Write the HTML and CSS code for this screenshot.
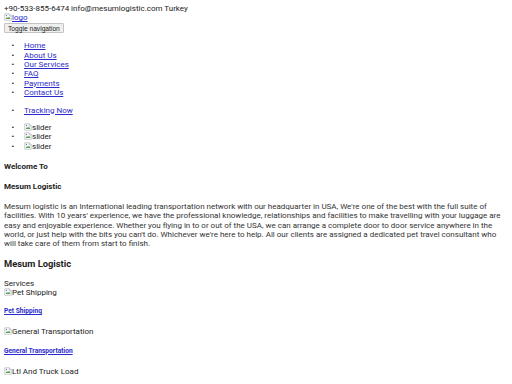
FILE: index.html
```html
<!DOCTYPE html>
<html lang="en">
<head>
<meta charset="utf-8">
<title>Mesum Logistic</title>
<link rel="stylesheet" href="styles.css">
</head>
<body>
<div class="topbar">+90-533-855-6474 info@mesumlogistic.com Turkey</div>
<div class="brand"><a class="link" href="#"><span class="broken"><svg class="bi" viewBox="0 0 16 16"><path d="M1.5 1.5h9l4 4v9h-13z" fill="#fff" stroke="#9a9a9a"/><path d="M10.5 1.5v4h4" fill="none" stroke="#9a9a9a"/><path d="M3 12l3-4 2 2 2-3 3 5z" fill="#5aa05a"/><circle cx="5" cy="5" r="1.3" fill="#4a86c8"/></svg>logo</span></a></div>
<button class="toggle" type="button">Toggle navigation</button>
<ul class="list">
  <li><a class="link" href="#">Home</a></li>
  <li><a class="link" href="#">About Us</a></li>
  <li><a class="link" href="#">Our Services</a></li>
  <li><a class="link" href="#">FAQ</a></li>
  <li><a class="link" href="#">Payments</a></li>
  <li><a class="link" href="#">Contact Us</a></li>
</ul>
<ul class="list">
  <li><a class="link" href="#">Tracking Now</a></li>
</ul>
<ul class="list">
  <li><span class="broken"><svg class="bi" viewBox="0 0 16 16"><path d="M1.5 1.5h9l4 4v9h-13z" fill="#fff" stroke="#9a9a9a"/><path d="M10.5 1.5v4h4" fill="none" stroke="#9a9a9a"/><path d="M3 12l3-4 2 2 2-3 3 5z" fill="#5aa05a"/><circle cx="5" cy="5" r="1.3" fill="#4a86c8"/></svg>slider</span></li>
  <li><span class="broken"><svg class="bi" viewBox="0 0 16 16"><path d="M1.5 1.5h9l4 4v9h-13z" fill="#fff" stroke="#9a9a9a"/><path d="M10.5 1.5v4h4" fill="none" stroke="#9a9a9a"/><path d="M3 12l3-4 2 2 2-3 3 5z" fill="#5aa05a"/><circle cx="5" cy="5" r="1.3" fill="#4a86c8"/></svg>slider</span></li>
  <li><span class="broken"><svg class="bi" viewBox="0 0 16 16"><path d="M1.5 1.5h9l4 4v9h-13z" fill="#fff" stroke="#9a9a9a"/><path d="M10.5 1.5v4h4" fill="none" stroke="#9a9a9a"/><path d="M3 12l3-4 2 2 2-3 3 5z" fill="#5aa05a"/><circle cx="5" cy="5" r="1.3" fill="#4a86c8"/></svg>slider</span></li>
</ul>
<h4 class="heading-sm">Welcome To</h4>
<h4 class="heading-sm">Mesum Logistic</h4>
<p class="about">Mesum logistic is an International leading transportation network with our headquarter in USA, We're one of the best with the full suite of facilities. With 10 years' experience, we have the professional knowledge, relationships and facilities to make travelling with your luggage are easy and enjoyable experience. Whether you flying in to or out of the USA, we can arrange a complete door to door service anywhere in the world, or just help with the bits you can't do. Whichever we're here to help. All our clients are assigned a dedicated pet travel consultant who will take care of them from start to finish.</p>
<h3 class="heading-md">Mesum Logistic</h3>
<div class="services-label">Services</div>
<div class="service">
  <span class="broken"><svg class="bi" viewBox="0 0 16 16"><path d="M1.5 1.5h9l4 4v9h-13z" fill="#fff" stroke="#9a9a9a"/><path d="M10.5 1.5v4h4" fill="none" stroke="#9a9a9a"/><path d="M3 12l3-4 2 2 2-3 3 5z" fill="#5aa05a"/><circle cx="5" cy="5" r="1.3" fill="#4a86c8"/></svg>Pet Shipping</span>
  <h5 class="service-title"><a class="link" href="#">Pet Shipping</a></h5>
</div>
<div class="service">
  <span class="broken"><svg class="bi" viewBox="0 0 16 16"><path d="M1.5 1.5h9l4 4v9h-13z" fill="#fff" stroke="#9a9a9a"/><path d="M10.5 1.5v4h4" fill="none" stroke="#9a9a9a"/><path d="M3 12l3-4 2 2 2-3 3 5z" fill="#5aa05a"/><circle cx="5" cy="5" r="1.3" fill="#4a86c8"/></svg>General Transportation</span>
  <h5 class="service-title"><a class="link" href="#">General Transportation</a></h5>
</div>
<div class="service">
  <span class="broken"><svg class="bi" viewBox="0 0 16 16"><path d="M1.5 1.5h9l4 4v9h-13z" fill="#fff" stroke="#9a9a9a"/><path d="M10.5 1.5v4h4" fill="none" stroke="#9a9a9a"/><path d="M3 12l3-4 2 2 2-3 3 5z" fill="#5aa05a"/><circle cx="5" cy="5" r="1.3" fill="#4a86c8"/></svg>Ltl And Truck Load</span>
</div>
</body>
</html>
```
FILE: styles.css
```css
body {
  margin: 4px;
  font-family: Roboto, "Liberation Sans", sans-serif;
  font-size: 8px;
  line-height: 1.175;
  color: #222;
  background: #fff;
}
.link {
  color: #2b2bcc;
  text-decoration: underline;
}
.bi {
  width: 8px;
  height: 8px;
  vertical-align: -1px;
}
.toggle {
  display: block;
  font-family: "Liberation Sans", Arial, sans-serif;
  font-size: 6.67px;
  line-height: normal;
  padding: 0.5px 3px;
  background: #efefef;
  border: 1px solid #c4c4c4;
  border-radius: 1px;
  color: #222;
  height: 10.5px;
}
.list {
  margin: 8px 0;
  padding-left: 20px;
  list-style-type: "\2022\00a0\00a0\00a0\00a0\00a0";
}
.list li::marker {
  color: #111;
}
.heading-sm {
  font-size: 8px;
  font-weight: bold;
  margin: 10.64px 0;
}
.about {
  font-size: 8px;
  margin: 8px 0;
  color: #333;
}
.heading-md {
  font-size: 9.36px;
  font-weight: bold;
  margin: 9.36px 0;
}
.service-title {
  font-size: 6.64px;
  font-weight: bold;
  margin: 11.09px 0;
}
```
